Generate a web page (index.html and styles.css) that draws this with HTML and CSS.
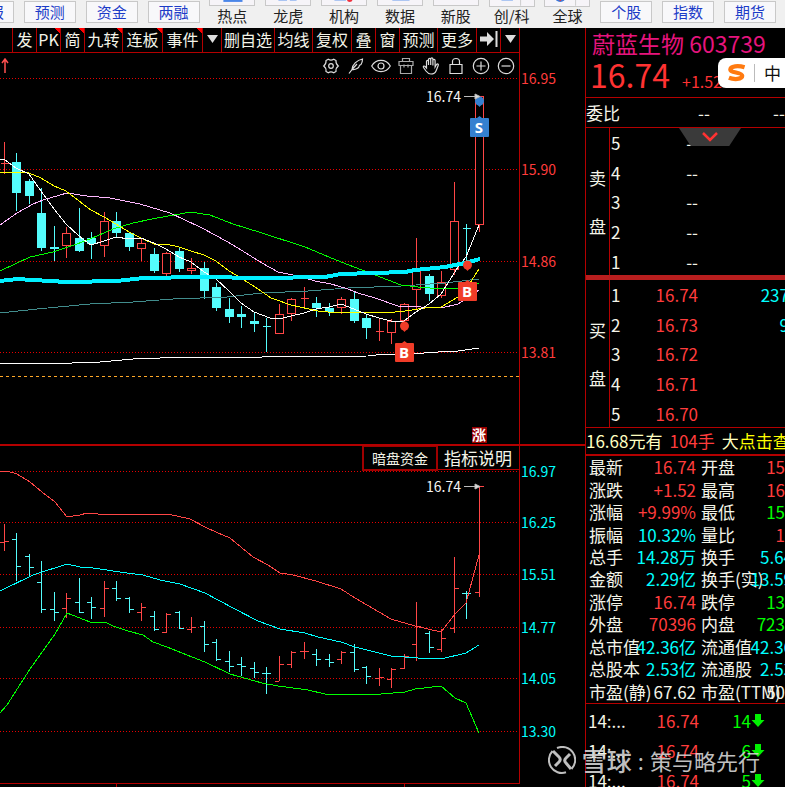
FILE: index.html
```html
<!DOCTYPE html>
<html lang="zh-CN">
<head>
<meta charset="utf-8">
<title>蔚蓝生物 603739</title>
<link rel="stylesheet" href="styles.css">
</head>
<body>
<header class="topbar">
  <button class="pill cut">报</button>
  <button class="pill">预测</button>
  <button class="pill">资金</button>
  <button class="pill">两融</button>
  <button class="tool"><span class="tile"><svg viewBox="0 0 46 6"><path d="M14 0h20v2h-20z" fill="#4a86e8"/></svg></span>热点</button>
  <button class="tool"><span class="tile"><svg viewBox="0 0 46 6"><path d="M13 0h9v1h-9zM25 0h7v1h-7z" fill="#a9c4f2"/></svg></span>龙虎</button>
  <button class="tool"><span class="tile"><svg viewBox="0 0 46 6"><path d="M13 0h12v1h-12z" fill="#a9c4f2"/><circle cx="29" cy="-1" r="3" fill="#f0303c"/></svg></span>机构</button>
  <button class="tool"><span class="tile"><svg viewBox="0 0 46 6"><path d="M15 0h18v1h-18z" fill="#a9c4f2"/></svg></span>数据</button>
  <button class="tool"><span class="tile"></span>新股</button>
  <button class="tool"><span class="tile tall"><svg viewBox="0 0 46 6"><path d="M12 0h12v1h-12z" fill="#a9c4f2"/><path d="M32 0v6" stroke="#ccc"/></svg></span>创/科</button>
  <button class="tool"><span class="tile tall"><svg viewBox="0 0 46 6"><circle cx="16" cy="-4" r="6" fill="#3a78d8"/><circle cx="16" cy="0" r="1" fill="#f0303c"/><path d="M32 0v6" stroke="#ccc"/></svg></span>全球</button>
  <button class="pill">个股</button>
  <button class="pill">指数</button>
  <button class="pill">期货</button>
</header>
<main class="layout">
  <section class="charts">
    <nav class="toolbar">
      <span></span>
      <button>发</button>
      <button class="flag">PK</button>
      <button class="flag">简</button>
      <button class="flag">九转</button>
      <button class="flag">连板</button>
      <button class="flag">事件</button>
      <button aria-label="展开"><svg width="11" height="8" viewBox="0 0 11 8"><path d="M0 0h11l-5.500 8z" fill="#ddd"/></svg></button>
      <button>删自选</button>
      <button>均线</button>
      <button>复权</button>
      <button>叠</button>
      <button>窗</button>
      <button>预测</button>
      <button>更多</button>
      <button aria-label="最后"><svg width="20" height="16" viewBox="0 0 20 16"><path d="M1 5.500h7V1l7 7-7 7v-4.500H1zM16.500 0h2v16h-2z" fill="#ddd"/></svg></button>
      <button aria-label="菜单"><svg width="11" height="8" viewBox="0 0 11 8"><path d="M0 0h11l-5.500 8z" fill="#ddd"/></svg></button>
    </nav>
    <div class="icons">
      <svg class="up" viewBox="0 0 10 16"><path d="M5 15V2M2 5l3-4 3 4" fill="none" stroke="#ff5050" stroke-width="1.500"/></svg>
      <button aria-label="设置"><svg viewBox="0 0 18 18"><path d="M6.300 2.200Q9 4 11.700 2.200L14 3.600Q13.600 7 16.300 9 13.600 11 14 14.400L11.700 15.800Q9 14 6.300 15.800L4 14.400Q4.400 11 1.700 9 4.400 7 4 3.600z"/><circle cx="9" cy="9" r="2.300"/></svg></button>
      <button aria-label="画线"><svg viewBox="0 0 18 18"><path d="M2 16.500 5 12.500C5 8 10 3 15.500 2c0 2.500-.5 4-1.500 5.500l-1.500.8c-.5 2.700-3.500 4.700-7.500 4.200M5 12.500l5-5.500"/></svg></button>
      <button aria-label="显示"><svg class="eye" viewBox="0 0 20 18"><path d="M.7 9C5 1.500 15 1.500 19.300 9 15 16.500 5 16.500.7 9z"/><circle cx="10" cy="9" r="3"/></svg></button>
      <button aria-label="工具箱"><svg class="dim" viewBox="0 0 18 18"><path d="M5.500 4.500v-3h7v3M2 4.500h14v4H2zM3.500 8.500v8h11v-8M7 7.500v3M11 7.500v3"/></svg></button>
      <button aria-label="拖动"><svg viewBox="0 0 18 18"><path d="M4.500 11V4.500c0-1.500 2-1.500 2 0V8 2.500c0-1.500 2.200-1.500 2.200 0V8 2c0-1.500 2.200-1.500 2.200 0v6.500V3.500c0-1.500 2.200-1.500 2.200 0V10l1.400-2.500c1-1 2.300-.4 1.700 1L14 14c-1 2.500-2.500 3-5 3s-3.500-1-5-3L1.500 10.500c-.6-1.300.7-2 1.600-1z"/></svg></button>
      <button aria-label="锁定"><svg viewBox="0 0 18 18"><path d="M3 7.500h12v9H3zM5.500 7.500v-3c0-4 7-4 7 0v3"/></svg></button>
      <button aria-label="放大"><svg viewBox="0 0 18 18"><circle cx="9" cy="9" r="7.700"/><path d="M4.500 9h9M9 4.500v9"/></svg></button>
      <button aria-label="缩小"><svg viewBox="0 0 18 18"><circle cx="9" cy="9" r="7.700"/><path d="M4.500 9h9"/></svg></button>
    </div>
    <svg class="chart" id="main" viewBox="0 78 585 366">
      <path class="grid" d="M0 78.500H519M0 169.500H519M0 261.500H519M0 352.500H519"/>
      <path class="dash" d="M0 376.500H519"/>
      <g id="candles"></g>
      <g class="lines">
        <polyline stroke="#418c8c" points="0,313 37,309 90,304 133,302 173,299 227,297 262,293 308,291 348,288 401,286 445,283 479,279"/>
        <polyline stroke="#fff" points="0,363 72,363 100,362 133,359 187,357 262,357 368,356 385,354 411,354 438,352 458,351 479,348"/>
        <polyline stroke="#ffb8ff" points="0,225 17,213 33,204 43,200 67,193 87,196 110,198 140,204 170,213 200,227 217,236 233,245 262,263 278,272 298,276 315,281 331,284 348,289 358,293 375,298 398,306 421,307 441,308 458,304 479,290"/>
        <polyline stroke="#0f0" points="0,271 30,257 53,252 77,244 90,239 113,229 133,223 157,218 180,214 190,212 210,215 233,224 262,233 305,247 341,262 375,275 401,285 418,287 441,289 465,288 479,283"/>
        <polyline stroke="#ff0" points="0,172 29,173 41,178 54,186 66,191 79,201 91,210 104,217 116,224 129,232 141,238 154,244 166,244 179,247 191,251 204,255 216,261 229,271 241,278 258,289 271,298 291,305 318,311 328,312 395,312 405,311 425,308 441,307 458,297 470,283 479,269"/>
        <polyline stroke="#fff" points="0,159 4,159 16,168 29,174 41,191 54,209 66,224 79,236 91,245 104,241 116,237 129,239 141,238 154,243 166,249 179,257 191,262 204,272 216,279 229,291 241,303 254,312 270,318 279,319 291,316 304,313 316,309 329,307 341,304 354,309 366,314 379,318 391,321 404,321 416,312 429,304 441,294 458,267 466,257 479,225"/>
        <polyline class="thick" stroke="#00f0ff" points="0,281 17,279 33,280 67,282 117,281 143,278 200,277 262,278 325,277 341,274 405,272 415,270 445,267 465,263 480,259"/>
      </g>
      <path class="frame" d="M519.500 78V444"/>
      <g fill="#f03c28">
        <circle cx="404.500" cy="326" r="4.500"/><path d="M402 329h5l-2.500 3z"/>
        <circle cx="467.500" cy="265" r="4.500"/><path d="M465 268h5l-2.500 3z"/>
        <rect x="395" y="343" width="19" height="19" rx="1"/><rect x="458" y="282" width="19" height="19" rx="1"/>
        <path d="M402 343l2.500-2 2.500 2zM465 282l2.500-2 2.500 2z"/>
      </g>
      <g fill="#3480d0">
        <circle cx="479.500" cy="101" r="4.500"/><path d="M477 104h5l-2.500 3z"/>
        <rect x="470" y="118" width="19" height="19" rx="1"/><path d="M477 118l2.500-2 2.500 2z"/>
      </g>
      <g class="tag"><text x="404" y="358">B</text><text x="467" y="297">B</text><text x="479" y="133">S</text></g>
      <path class="arrow" d="M464 96.500h11M475 94l5 2.500-5 2.500z"/>
      <text class="last" x="426" y="102">16.74</text>
      <rect x="472" y="427" width="15" height="16" fill="#900"/>
      <text class="rise" x="479" y="440">涨</text>
      <g class="axis red"><text x="521" y="84">16.95</text><text x="521" y="175">15.90</text><text x="521" y="267">14.86</text><text x="521" y="358">13.81</text></g>
    </svg>
    <div class="lower">
      <svg class="chart" id="sub" viewBox="0 446 585 341">
        <path class="grid" d="M0 471.500H519M0 522.500H519M0 574.500H519M0 627.500H519M0 678.500H519M0 731.500H519"/>
        <g id="bars"></g>
        <g class="lines">
          <polyline stroke="#ff4646" points="0,471 7,471 17,474 30,482 42,492 55,502 67,517 80,515 87,513 98,514 168,514 190,519 205,527 218,533 230,538 253,557 268,565 280,573 293,575 316,581 341,589 355,598 391,619 415,626 441,632 455,614 466,603 479,555"/>
          <polyline stroke="#0ff" points="0,591 33,575 67,564 80,567 93,568 127,573 143,575 160,580 180,584 205,593 233,608 258,621 280,629 305,633 318,637 341,642 355,647 391,656 418,658 441,659 466,653 479,645"/>
          <polyline stroke="#0f0" points="0,713 7,705 30,669 55,634 67,613 90,622 107,623 113,626 128,631 143,635 153,642 167,647 192,657 205,662 230,674 262,683 278,686 308,690 325,694 381,694 405,692 415,689 441,686 455,698 466,703 479,733"/>
        </g>
        <path class="frame" d="M519.500 446V784M0 783.500H520M116.500 784V787M404.500 784V787M438 469.500H519"/>
        <path class="arrow" d="M464 486.500h11M475 484l5 2.500-5 2.500z"/>
        <text class="last" x="426" y="492">16.74</text>
        <g class="axis cyan"><text x="521" y="477">16.97</text><text x="521" y="528">16.25</text><text x="521" y="580">15.51</text><text x="521" y="633">14.77</text><text x="521" y="684">14.05</text><text x="521" y="737">13.30</text></g>
      </svg>
      <div class="tabs"><button class="boxed">暗盘资金</button><button>指标说明</button></div>
    </div>
  </section>
  <aside class="panel">
    <div class="quote">
      <h1>蔚蓝生物 603739</h1>
      <p><strong>16.74</strong><span>+1.52</span><span>9.99%</span></p>
      <div class="ime">
        <svg viewBox="0 0 20 18"><path d="M18.500 3C12 1 3.500 1.500 3.500 5.500 3.500 9 16 8 16 12 16 16 7 16 2 14" fill="none" stroke="#ff7a10" stroke-width="4.500"/></svg>
        <span>中</span>
      </div>
    </div>
    <div class="ratio"><span>委比</span><span>--</span><span>--</span></div>
    <div class="book sell">
      <div class="side"><span>卖</span><span>盘</span></div>
      <table>
        <tr><th>5</th><td>--</td><td></td></tr>
        <tr><th>4</th><td>--</td><td></td></tr>
        <tr><th>3</th><td>--</td><td></td></tr>
        <tr><th>2</th><td>--</td><td></td></tr>
        <tr><th>1</th><td>--</td><td></td></tr>
      </table>
      <button class="drop" aria-label="展开"><svg width="16" height="10" viewBox="0 0 16 10"><path d="M1 1l7 7 7-7" fill="none" stroke="#ff3232" stroke-width="2.500"/></svg></button>
    </div>
    <div class="book buy">
      <div class="side"><span>买</span><span>盘</span></div>
      <table>
        <tr><th>1</th><td>16.74</td><td>237</td></tr>
        <tr><th>2</th><td>16.73</td><td>9</td></tr>
        <tr><th>3</th><td>16.72</td><td></td></tr>
        <tr><th>4</th><td>16.71</td><td></td></tr>
        <tr><th>5</th><td>16.70</td><td></td></tr>
      </table>
    </div>
    <p class="notice"><span>16.68元有</span><span class="r">104手</span><span>大<a href="#">点击查</a></span></p>
    <table class="info">
      <tr><th>最新</th><td class="r">16.74</td><th>开盘</th><td class="r">15</td></tr>
      <tr><th>涨跌</th><td class="r">+1.52</td><th>最高</th><td class="r">16</td></tr>
      <tr><th>涨幅</th><td class="r">+9.99%</td><th>最低</th><td class="g">15</td></tr>
      <tr><th>振幅</th><td class="c">10.32%</td><th>量比</th><td class="r">1</td></tr>
      <tr><th>总手</th><td class="c">14.28万</td><th>换手</th><td class="c wide">5.64</td></tr>
      <tr><th>金额</th><td class="c">2.29亿</td><th>换手(实)</th><td class="c wide">13.59</td></tr>
      <tr><th>涨停</th><td class="r">16.74</td><th>跌停</th><td class="g">13</td></tr>
      <tr><th>外盘</th><td class="r">70396</td><th>内盘</th><td class="g">723</td></tr>
      <tr><th>总市值</th><td class="c">42.36亿</td><th>流通值</th><td class="c wide">42.36</td></tr>
      <tr><th>总股本</th><td class="c">2.53亿</td><th>流通股</th><td class="c wide">2.53</td></tr>
      <tr><th>市盈(静)</th><td>67.62</td><th>市盈(TTM)</th><td>50</td></tr>
    </table>
    <table class="ticks">
      <tr><td>14:...</td><td class="r">16.74</td><td class="g">14</td><td><svg viewBox="0 0 13 13"><path d="M3.500 0h6v6H13l-6.500 7L0 6h3.500z"/></svg></td></tr>
      <tr><td>14:...</td><td class="r">16.74</td><td class="g">6</td><td><svg viewBox="0 0 13 13"><path d="M3.500 0h6v6H13l-6.500 7L0 6h3.500z"/></svg></td></tr>
      <tr><td>14:...</td><td class="r">16.74</td><td class="g">5</td><td><svg viewBox="0 0 13 13"><path d="M3.500 0h6v6H13l-6.500 7L0 6h3.500z"/></svg></td></tr>
    </table>
  </aside>
  <div class="watermark">
    <svg viewBox="0 0 28 28"><g fill="none" stroke="#d4d4d4" stroke-width="2"><path d="M4.500 5A13 13 0 0 0 18 26.300M9 2A13 13 0 0 1 23.500 23"/><path d="M5 5l6 6q2.500 2.500 0 5l-4 4M22 8l-4 4q-2.500 2.500 0 5l5 6" stroke-width="3"/></g></svg>
    <b>雪球</b><span>:</span><span>策与略先行</span>
  </div>
</main>
<script src="chart.js"></script>
</body>
</html>
```
FILE: styles.css
```css
* { box-sizing: border-box; }
body { margin: 0; background: #000; color: #f4f4e8; font: 17px/24px "Noto Sans CJK SC", sans-serif; overflow-x: hidden; }
button { margin: 0; padding: 0; border: 0; background: none; color: inherit; font: inherit; white-space: nowrap; }
h1, p { margin: 0; font-weight: 400; }
table, tbody { display: block; }
th, td { padding: 0; font-weight: 400; text-align: left; white-space: nowrap; }
svg { display: block; }

.topbar { display: flex; justify-content: space-between; height: 28px; padding-right: 9px; background: #f0f0f0; overflow: hidden; }
.pill { width: 52px; height: 22px; margin-top: 1px; border: 1px solid #c8c8c8; background: #f8f8fa; color: #1c3cc8; font-size: 15px; line-height: 20px; }
.cut { display: flex; justify-content: flex-end; width: 14px; padding-right: 9px; border-left: 0; overflow: hidden; }
.tool { display: flex; flex-direction: column; align-items: center; width: 46px; color: #222; font-size: 15px; line-height: 20px; }
.tile { width: 46px; height: 6px; border: 1px solid #c8c8c8; border-top: 0; background: #f6f4f8; }
.tall { height: 7px; margin-bottom: -1px; }

.layout { position: relative; display: grid; grid-template-columns: minmax(0, 1fr) 200px; }
.toolbar { display: grid; grid-template-columns: 13fr 24fr 24fr 24fr 38fr 40fr 40fr 19fr 53fr 38fr 39fr 24fr 24fr 38fr 39fr 24fr 19fr; height: 25px; margin-right: 11.11%; border-bottom: 1px solid #b40000; }
.toolbar > * { display: flex; align-items: center; justify-content: center; min-width: 0; border-right: 1px solid #b40000; font-size: 16px; line-height: 22px; padding-bottom: 2px; }
.flag { background: linear-gradient(225deg, #f00 4px, transparent 4px); }
.icons { display: flex; align-items: center; gap: 7px; height: 25px; margin-right: 11.11%; padding-right: 4px; border-right: 1px solid #b40000; }
.icons svg { width: 18px; height: 18px; fill: none; stroke: #ddd; stroke-width: 1.2; }
.icons .up { width: 10px; height: 16px; margin-right: auto; }
.icons .eye { width: 20px; margin: 0 -1px; }
.icons .dim { stroke: #aaa; }

.chart { width: 100%; height: auto; overflow: visible; }
.grid { stroke: #e60000; stroke-dasharray: 1 2; shape-rendering: crispEdges; }
.dash { stroke: #ffa828; stroke-dasharray: 3 3; shape-rendering: crispEdges; }
.frame { stroke: #b40000; fill: none; shape-rendering: crispEdges; }
.lines { fill: none; stroke-width: 1; shape-rendering: crispEdges; }
.lines .thick { stroke-width: 4; }
.up-bar { stroke: #ff4646; fill: #000; shape-rendering: crispEdges; }
.down-bar { stroke: #54fcfc; fill: #54fcfc; shape-rendering: crispEdges; }
.tag { fill: #fff; font: bold 15px "Open Sans", sans-serif; text-anchor: middle; }
.arrow { stroke: #bbb; fill: #ddd; }
.last { fill: #f4f4f4; font-size: 14px; }
.rise { fill: #fff; font-size: 14px; font-weight: 700; text-anchor: middle; }
.axis { font-size: 14px; }
.axis.red { fill: #ff3c3c; }
.axis.cyan { fill: #00ffff; }
.lower { position: relative; border-top: 2px solid #b40000; }
.tabs { position: absolute; top: 0; right: 11.11%; display: flex; }
.tabs button { width: 82px; height: 24px; padding-right: 2px; line-height: 24px; }
.tabs .boxed { width: 76px; height: 25px; padding: 0; border: 2px solid #a00000; border-top-width: 1px; font-size: 14px; line-height: 21px; }

.panel { min-width: 0; border-left: 1px solid #b40000; overflow: hidden; }
.r { color: #ff3c3c; }
.g { color: #00ff00; }
.c { color: #00ffff; }
.quote { position: relative; height: 70px; border-bottom: 1px solid #b40000; }
.quote h1 { padding-left: 6px; color: #e6147d; font-size: 23px; line-height: 30px; white-space: nowrap; }
.quote p { display: flex; align-items: baseline; padding-left: 4px; color: #ff3232; font-size: 16px; line-height: 32px; white-space: nowrap; }
.quote strong { flex: none; width: 92px; font-size: 32px; font-weight: 400; }
.quote p span { flex: none; width: 75px; }
.ime { position: absolute; top: 30px; left: 132px; right: -12px; display: flex; align-items: center; height: 30px; padding-left: 9px; border-radius: 8px; background: #fff; color: #111; }
.ime svg { width: 19px; height: 18px; }
.ime span { margin-left: 8px; padding-left: 9px; border-left: 1px solid #bbb; line-height: 18px; }
.ratio { display: grid; grid-template-columns: 112px 75px 1fr; height: 30px; border-bottom: 1px solid #b40000; line-height: 29px; }
.book { position: relative; display: grid; grid-template-columns: 24px 1fr; height: 147px; }
.side { display: flex; flex-direction: column; align-items: center; justify-content: center; gap: 24px; border-right: 1px solid #b40000; }
.book table { padding-left: 1px; }
.book tbody { display: grid; grid-auto-rows: 1fr; height: 148px; }
.book tr { display: grid; grid-template-columns: 28px 59px 91px; align-items: center; line-height: 29px; }
.book td { text-align: right; }
.buy { height: 153px; border-top: 5px solid #b81e1e; border-bottom: 1px solid #b40000; }
.buy td { color: #ff3c3c; }
.buy td:last-child { color: #00ffff; }
.drop { position: absolute; top: 0; left: 93px; display: flex; align-items: center; justify-content: center; width: 62px; height: 18px; background: #3a3a3a; clip-path: polygon(0 0, 100% 0, 81% 100%, 19% 100%); }
.notice { display: flex; gap: 7px; height: 28px; border-bottom: 2px solid #b40000; color: #ffffc0; line-height: 26px; white-space: nowrap; }
.notice .r { color: #ff3c3c; }
.notice a { color: #ffff00; text-decoration: none; }
.info tbody { display: grid; grid-auto-rows: 1fr; height: 248px; border-bottom: 1px solid #b40000; }
.info tr { display: grid; grid-template-columns: 30px 77px 35px 1fr; align-items: center; padding-left: 3px; line-height: 22px; }
.info td { text-align: right; }
.info th:nth-child(3) { padding-left: 5px; }
.info .wide { margin-right: -8px; }
.ticks { height: 83px; padding: 2px 0 0 2px; overflow: hidden; }
.ticks tbody { display: grid; grid-auto-rows: 1fr; height: 89px; }
.ticks tr { display: grid; grid-template-columns: 40px 71px 52px 14px; align-items: center; line-height: 29px; }
.ticks td:nth-child(2), .ticks td:nth-child(3) { text-align: right; }
.ticks svg { width: 14px; height: 13px; fill: #00f000; }
.watermark { position: absolute; right: 25px; bottom: 12px; display: flex; align-items: center; gap: 6px; height: 30px; color: #d4d4d4; font-size: 22px; line-height: 30px; opacity: 0.9; white-space: nowrap; }
.watermark svg { width: 28px; height: 28px; }
.watermark b { font-size: 25px; font-weight: 500; }
```
FILE: chart.js
```js
const NS = "http://www.w3.org/2000/svg";

// x, high, low, body top, body bottom, rising
const candles = [
  [4,142,174,163,163,1],[16,153,211,162,193,0],[29,179,204,181,196,0],[41,188,251,213,248,0],
  [54,226,261,247,249,0],[66,227,258,233,246,1],[79,208,252,238,251,0],[91,232,259,238,244,0],
  [104,212,257,221,246,1],[116,212,238,221,233,0],[129,232,251,233,247,0],[141,238,261,243,249,1],
  [154,248,273,254,271,0],[166,252,276,253,274,1],[179,248,272,251,269,0],[191,258,274,268,271,1],
  [204,262,299,268,291,0],[216,283,311,287,308,0],[229,298,323,309,317,0],[241,306,328,314,317,0],
  [254,313,332,321,324,0],[266,318,352,326,326,0],[279,304,334,314,334,1],[291,298,321,299,314,1],
  [304,287,308,298,298,1],[316,297,317,303,308,0],[329,303,316,308,312,0],[341,297,314,299,308,1],
  [354,291,323,299,321,0],[366,315,339,318,328,0],[379,318,341,331,331,1],[391,319,344,321,333,1],
  [404,303,322,304,321,1],[416,238,310,268,290,1],[429,274,301,276,294,0],[441,271,298,282,296,1],
  [454,182,275,221,270,1],[466,224,262,228,228,0],[479,96,232,96,225,1]
];

// x, high, low, open, close, rising
const bars = [
  [4,524,551,542,541,1],[16,533,581,539,566,0],[29,554,576,556,567,0],[41,561,613,582,609,0],
  [54,592,621,609,612,0],[66,593,618,608,598,1],[79,578,612,602,612,0],[91,597,619,602,607,0],
  [104,581,617,608,588,1],[116,581,601,588,598,0],[129,597,613,598,609,0],[141,603,621,612,607,1],
  [154,611,631,616,629,0],[166,613,633,632,614,1],[179,611,629,612,628,0],[191,617,633,629,627,1],
  [204,621,652,626,644,0],[216,639,661,642,659,0],[229,651,672,661,666,0],[241,657,676,664,666,0],
  [254,662,678,668,672,0],[266,667,694,673,673,0],[279,656,681,681,664,1],[291,651,668,664,652,1],
  [304,642,659,651,651,1],[316,649,666,654,659,0],[329,654,667,659,662,0],[341,651,664,659,652,1],
  [354,644,672,652,669,0],[366,666,684,667,676,0],[379,668,686,678,677,1],[391,668,688,679,669,1],
  [404,654,669,668,656,1],[416,602,661,644,626,1],[429,631,653,633,647,0],[441,629,652,649,638,1],
  [454,557,633,628,588,1],[466,591,619,593,593,0],[479,486,597,592,486,1]
];

function draw(group, d, rising) {
  const path = document.createElementNS(NS, "path");
  path.setAttribute("d", d);
  path.setAttribute("class", rising ? "up-bar" : "down-bar");
  group.appendChild(path);
}

const candleGroup = document.getElementById("candles");
for (const [x, high, low, top, bottom, rising] of candles) {
  const c = x + 0.5;
  draw(candleGroup,
    `M${c} ${high}V${top}M${c} ${bottom}V${low}M${c - 4} ${top + 0.5}H${c + 4}V${Math.max(top, bottom - 1) + 0.5}H${c - 4}Z`,
    rising);
}

const barGroup = document.getElementById("bars");
for (const [x, high, low, open, close, rising] of bars) {
  const c = x + 0.5;
  draw(barGroup, `M${c} ${high}V${low}M${x - 4} ${open + 0.5}H${x}M${x} ${close + 0.5}H${x + 5}`, rising);
}
```
